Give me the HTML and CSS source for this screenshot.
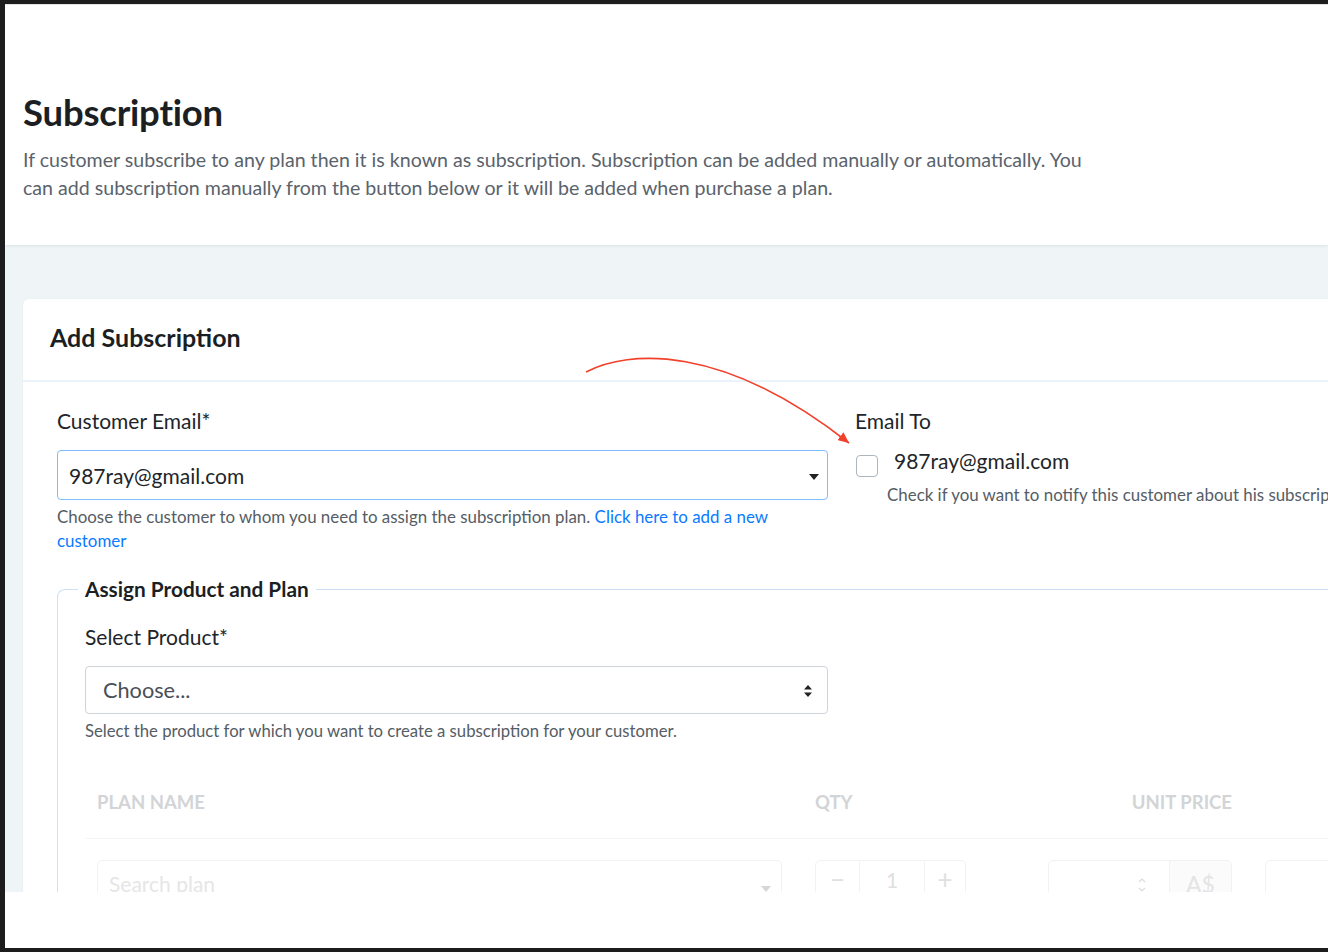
FILE: index.html
```html
<!DOCTYPE html>
<html lang="en">
<head>
<meta charset="utf-8">
<title>Subscription</title>
<link rel="stylesheet" href="styles.css">
</head>
<body>
<div class="frame">
  <div class="viewport">
    <header class="page-head">
      <h1 class="page-title">Subscription</h1>
      <p class="page-desc">If customer subscribe to any plan then it is known as subscription. Subscription can be added manually or automatically. You can add subscription manually from the button below or it will be added when purchase a plan.</p>
    </header>
    <main class="content">
      <section class="card">
        <div class="card-head">Add Subscription</div>
        <div class="card-body">
          <div class="row">
            <div class="col">
              <label class="label">Customer Email*</label>
              <div class="select select-focus">
                <span class="select-value">987ray@gmail.com</span>
                <svg class="caret" width="10" height="6" viewBox="0 0 10 6"><path d="M0 0H10L5 6Z" fill="#222"/></svg>
              </div>
              <p class="help">Choose the customer to whom you need to assign the subscription plan. <a class="link" href="#">Click here to add a new customer</a></p>
            </div>
            <div class="col">
              <label class="label">Email To</label>
              <div class="check-row">
                <span class="checkbox"></span>
                <span class="check-text">987ray@gmail.com</span>
              </div>
              <p class="help help-check">Check if you want to notify this customer about his subscription plan.</p>
            </div>
          </div>
          <fieldset class="fieldset">
            <legend class="legend">Assign Product and Plan</legend>
            <label class="label">Select Product*</label>
            <div class="select select-plain">
              <span class="select-placeholder">Choose...</span>
              <svg class="updown" width="10" height="14" viewBox="0 0 10 14"><path d="M1 5.5H9L5 1Z M1 8.5H9L5 13Z" fill="#222"/></svg>
            </div>
            <p class="help help-product">Select the product for which you want to create a subscription for your customer.</p>
            <div class="plan-table">
              <div class="plan-row plan-head">
                <span class="th">PLAN NAME</span>
                <span class="th">QTY</span>
                <span class="th th-right">UNIT PRICE</span>
                <span class="th"></span>
              </div>
              <div class="plan-row plan-inputs">
                <div class="fade-input">
                  <span class="fade-ph">Search plan</span>
                  <svg class="fade-caret" width="10" height="6" viewBox="0 0 10 6"><path d="M0 0H10L5 6Z" fill="#d6d6d6"/></svg>
                </div>
                <div class="qty">
                  <span class="qty-btn">&minus;</span>
                  <span class="qty-val">1</span>
                  <span class="qty-btn">+</span>
                </div>
                <div class="price">
                  <span class="price-field">
                    <svg class="spin" width="10" height="18" viewBox="0 0 10 18"><path d="M2 6L5 3L8 6 M2 12L5 15L8 12" fill="none" stroke="#dcdcdc" stroke-width="1.2"/></svg>
                  </span>
                  <span class="price-addon">A$</span>
                </div>
                <div class="fade-input"></div>
              </div>
            </div>
          </fieldset>
        </div>
      </section>
    </main>
    <svg class="annot-arrow" width="1328" height="952" viewBox="0 0 1328 952">
      <defs>
        <marker id="ah" markerWidth="11" markerHeight="10" refX="11" refY="5" orient="auto" markerUnits="userSpaceOnUse">
          <path d="M0 0L11 5L0 10Z" fill="#f2412b"/>
        </marker>
      </defs>
      <path d="M586 372 C 628 350, 722 343, 849 443" fill="none" stroke="#f2412b" stroke-width="1.6" marker-end="url(#ah)"/>
    </svg>
  </div>
  <div class="frame-foot"></div>
</div>
</body>
</html>
```

FILE: styles.css
```css
* { box-sizing: border-box; }
html, body { margin: 0; padding: 0; }
body {
  background: #1d1d1d;
  font-family: "Lato", "Open Sans", "Liberation Sans", sans-serif;
  color: #212529;
  width: 1328px;
  height: 952px;
  overflow: hidden;
  padding: 4px 0 0 5px;
}
.frame {
  width: 1323px;
  height: 944px;
  background: #fff;
  display: flex;
  flex-direction: column;
  overflow: hidden;
}
.viewport {
  height: 888px;
  overflow: hidden;
  background: #eff4f7;
  flex: none;
}
.frame-foot { flex: 1; background: #fff; }

.page-head {
  background: #fff;
  border-top: 1px solid #e4e4e4;
  padding: 87px 18px 43px;
  box-shadow: 0 1px 3px rgba(0,0,0,0.08);
  position: relative;
}
.page-title {
  margin: 0;
  font-size: 36.5px;
  line-height: 40px;
  font-weight: 700;
  color: #1b1f24;
  letter-spacing: -0.2px;
}
.page-desc {
  margin: 14px 0 0;
  width: 1075px;
  font-size: 19.6px;
  line-height: 28px;
  color: #5a636c;
}

.content {
  padding: 54px 0 0 18px;
}
.card {
  width: 1700px;
  background: #fff;
  border-radius: 6px;
  box-shadow: 0 0 2px rgba(0,0,0,0.06);
}
.card-head {
  padding: 23px 27px 0;
  height: 83px;
  font-size: 25px;
  line-height: 30px;
  font-weight: 700;
  color: #1b1f24;
  border-bottom: 2px solid #eaf3fc;
}
.card-body {
  padding: 27px 34px 0;
}
.row {
  display: grid;
  grid-template-columns: 771px 771px;
  column-gap: 27px;
}
.label {
  display: block;
  font-size: 21px;
  line-height: 24px;
  color: #212529;
  margin-bottom: 17px;
}
.select {
  display: flex;
  align-items: center;
  justify-content: space-between;
  border-radius: 4px;
  background: #fff;
}
.select-focus {
  height: 50px;
  border: 1px solid #80bdff;
  padding: 0 8px 0 11px;
}
.select-value { font-size: 21px; color: #212529; }
.caret { margin-top: 3px; }
.help {
  margin: 5px 0 0;
  font-size: 16.9px;
  line-height: 24px;
  color: #555d65;
}
.link { color: #0a7aff; text-decoration: none; }

.check-row {
  display: flex;
  align-items: flex-start;
  height: 30px;
}
.checkbox {
  width: 22px;
  height: 22px;
  border: 1.5px solid #adb5bd;
  border-radius: 4px;
  margin: 5px 16px 0 1px;
  flex: none;
}
.check-text { font-size: 21px; line-height: 26px; color: #212529; margin-top: -2px; }
.help-check { margin: 3px 0 0 32px; white-space: nowrap; }

.fieldset {
  margin: 24px 0 0;
  border: 1.5px solid #cfe0f7;
  border-bottom: none;
  border-right: none;
  border-radius: 8px 0 0 0;
  padding: 24px 0 0 27px;
  min-width: 0;
  height: 400px;
}
.legend {
  font-size: 20.8px;
  font-weight: 700;
  color: #1b1f24;
  padding: 0 7px;
  margin-left: -7px;
  line-height: 24px;
}
.select-plain {
  width: 743px;
  height: 48px;
  border: 1px solid #ced4da;
  padding: 0 14px 0 17px;
}
.select-placeholder { font-size: 21.7px; color: #495057; }
.updown { margin-top: 1px; }
.help-product { font-size: 16.7px; }

.plan-table { margin-top: 46px; width: 1400px; }
.plan-row {
  display: grid;
  grid-template-columns: 685px 151px 233px 200px;
  column-gap: 33px;
  padding-left: 12px;
}
.plan-row > :nth-child(3) { margin-left: 49px; }
.plan-head {
  height: 50px;
  border-bottom: 1px solid #f6f6f6;
  padding-top: 2px;
}
.th {
  font-size: 18.5px;
  font-weight: 700;
  color: #d2d4d6;
}
.th-right { text-align: right; }
.plan-inputs { padding-top: 21px; }
.fade-input {
  height: 48px;
  border: 1px solid #f2f2f2;
  border-radius: 5px;
  display: flex;
  align-items: center;
  justify-content: space-between;
  padding: 0 10px 0 11px;
}
.fade-ph { font-size: 21px; color: #e6e6e6; margin-top: -1px; }
.fade-caret { margin-top: 10px; }
.qty {
  height: 48px;
  border: 1px solid #f2f2f2;
  border-radius: 5px;
  display: grid;
  grid-template-columns: 43px 66px 1fr;
}
.qty-btn, .qty-val {
  display: flex;
  align-items: center;
  justify-content: center;
  font-size: 26px;
  color: #e0e0e0;
  padding-bottom: 10px;
}
.qty-val { border-left: 1px solid #f2f2f2; border-right: 1px solid #f2f2f2; font-size: 21px; }
.price {
  height: 48px;
  border: 1px solid #f2f2f2;
  border-radius: 5px;
  display: grid;
  grid-template-columns: 1fr 62px;
  overflow: hidden;
}
.price-field { display: flex; align-items: center; justify-content: flex-end; padding-right: 22px; padding-top: 2px; }
.price-addon {
  background: #fbfbfb;
  border-left: 1px solid #f2f2f2;
  display: flex;
  align-items: center;
  justify-content: center;
  font-size: 23px;
  color: #e4e4e4;
  padding-top: 0;
}

.annot-arrow {
  position: absolute;
  left: 0;
  top: 0;
  pointer-events: none;
}
```
